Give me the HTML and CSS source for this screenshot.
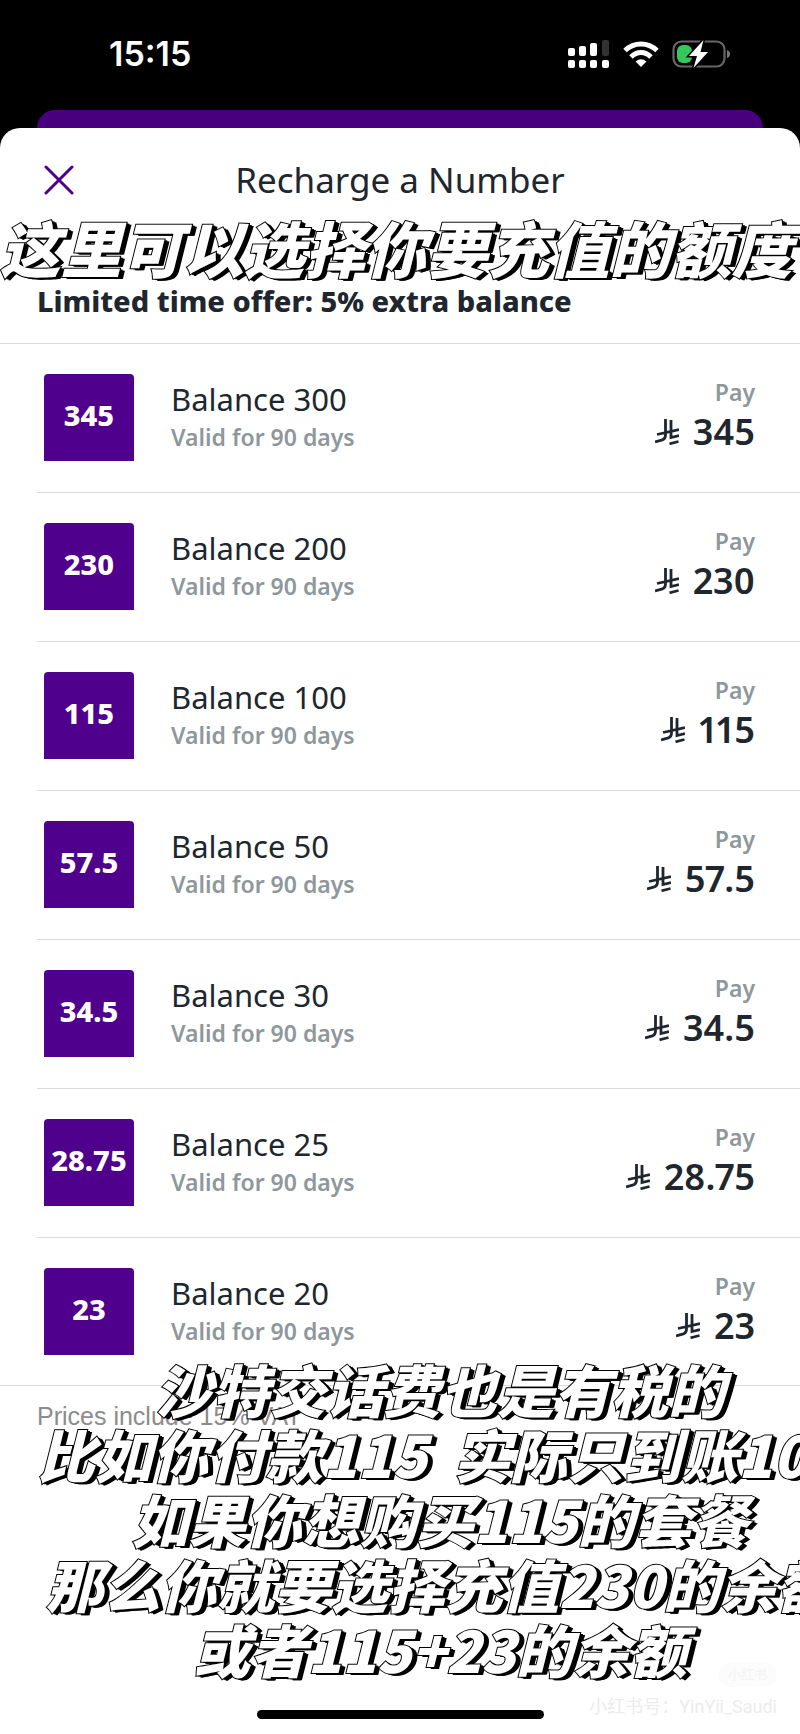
FILE: index.html
```
<!doctype html>
<html lang="en">
<head>
  <meta charset="utf-8">
  <meta name="viewport" content="width=device-width, initial-scale=1.0">
  <title>Recharge a Number</title>
  <link rel="stylesheet" href="styles.css">
</head>
<body>

  <svg class="defs" width="0" height="0" aria-hidden="true">
    <symbol id="riyal" viewBox="0 0 24 26">
      <path d="M10.500 0V16Q10.500 20 7.500 20.800L0 23M16 1V18.500L24 16.500M2 15.500L24 10.500M14.500 24.800L23.500 22.500" fill="none" stroke="currentColor" stroke-width="2.800"/>
    </symbol>
  </svg>

  <div class="statusbar">
    <span class="time">15:15</span>
    <div class="status-icons">
      <svg width="42" height="28" viewBox="0 0 42 28" fill="#fff">
        <rect x="0" y="8" width="7" height="8" rx="2"/>
        <rect x="11" y="6" width="7" height="10" rx="2"/>
        <rect x="22" y="3" width="7" height="13" rx="2"/>
        <rect x="34" y="0" width="7" height="16" rx="2" fill="#333"/>
        <rect x="0" y="20" width="7" height="8" rx="2"/>
        <rect x="11" y="20" width="7" height="8" rx="2"/>
        <rect x="22" y="20" width="7" height="8" rx="2"/>
        <rect x="34" y="20" width="7" height="8" rx="2"/>
      </svg>
      <svg width="36" height="26" viewBox="0 0 36 26" fill="none" stroke="#fff" stroke-width="5">
        <path d="M2 9.500Q9 3 18 3T34 9.500"/>
        <path d="M8 16Q12.500 11.500 18 11.500T28 16"/>
        <path d="M18 26L12.500 20.500Q18 16 23.500 20.500Z" fill="#fff" stroke="none"/>
      </svg>
      <svg width="58" height="28" viewBox="0 0 58 28">
        <rect x="1.500" y="1.500" width="51" height="25" rx="8" fill="none" stroke="#666" stroke-width="2.200"/>
        <path d="M55 10V18Q58 17 58 14T55 10Z" fill="#777"/>
        <rect x="5" y="5" width="15" height="18" rx="6" fill="#34c759"/>
        <path d="M31.500 0L17 16H25L21.500 28L36 12H28.500Z" fill="#fff" stroke="#000" stroke-width="3" paint-order="stroke"/>
      </svg>
    </div>
  </div>

  <div class="back-card"></div>

  <main class="sheet">
    <header class="sheet-header">
      <button class="close" type="button" aria-label="Close">
        <svg width="30" height="30" viewBox="0 0 30 30" fill="none" stroke="#4f008c" stroke-width="3" stroke-linecap="round"><path d="M2 2L28 28M28 2L2 28"/></svg>
      </button>
      <h1>Recharge a Number</h1>
    </header>

    <h2 class="offer">Limited time offer: 5% extra balance</h2>

    <ul class="plans">
      <li class="plan">
        <span class="tile">345</span>
        <div class="info"><h3>Balance 300</h3><p>Valid for 90 days</p></div>
        <div class="pay"><span class="label">Pay</span><span class="price"><svg><use href="#riyal"/></svg>345</span></div>
      </li>
      <li class="plan">
        <span class="tile">230</span>
        <div class="info"><h3>Balance 200</h3><p>Valid for 90 days</p></div>
        <div class="pay"><span class="label">Pay</span><span class="price"><svg><use href="#riyal"/></svg>230</span></div>
      </li>
      <li class="plan">
        <span class="tile">115</span>
        <div class="info"><h3>Balance 100</h3><p>Valid for 90 days</p></div>
        <div class="pay"><span class="label">Pay</span><span class="price"><svg><use href="#riyal"/></svg>115</span></div>
      </li>
      <li class="plan">
        <span class="tile">57.5</span>
        <div class="info"><h3>Balance 50</h3><p>Valid for 90 days</p></div>
        <div class="pay"><span class="label">Pay</span><span class="price"><svg><use href="#riyal"/></svg>57.5</span></div>
      </li>
      <li class="plan">
        <span class="tile">34.5</span>
        <div class="info"><h3>Balance 30</h3><p>Valid for 90 days</p></div>
        <div class="pay"><span class="label">Pay</span><span class="price"><svg><use href="#riyal"/></svg>34.5</span></div>
      </li>
      <li class="plan">
        <span class="tile">28.75</span>
        <div class="info"><h3>Balance 25</h3><p>Valid for 90 days</p></div>
        <div class="pay"><span class="label">Pay</span><span class="price"><svg><use href="#riyal"/></svg>28.75</span></div>
      </li>
      <li class="plan">
        <span class="tile">23</span>
        <div class="info"><h3>Balance 20</h3><p>Valid for 90 days</p></div>
        <div class="pay"><span class="label">Pay</span><span class="price"><svg><use href="#riyal"/></svg>23</span></div>
      </li>
    </ul>

    <p class="vat">Prices include 15% VAT</p>

    <div class="home-bar"></div>

    <!-- captions over the sheet -->
    <div class="caption caption-top" lang="zh">这里可以选择你要充值的额度</div>
    <div class="caption caption-bottom" lang="zh">
      <p>沙特交话费也是有税的</p>
      <p>比如你付款115&nbsp; 实际只到账100</p>
      <p>如果你想购买115的套餐</p>
      <p>那么你就要选择充值230的余额</p>
      <p>或者115+23的余额</p>
    </div>
    <div class="watermark" lang="zh">
      <span class="badge">小红书</span>
      <span>小红书号：YinYii_Saudi</span>
    </div>
  </main>

</body>
</html>
```
FILE: styles.css
```
* {
    margin: 0;
    padding: 0;
    box-sizing: border-box;
}
body {
    background: #000;
    color: #20262e;
    font-family: "Noto Sans", "Noto Sans CJK SC", sans-serif;
    overflow-x: hidden;
}
.defs {
    position: absolute;
}

/* status bar */
.statusbar {
    height: 110px;
    padding: 0 70px 2px 109px;
    display: flex;
    align-items: center;
    justify-content: space-between;
    color: #fff;
}
.time {
    font: 600 34px/40px Inter, sans-serif;
}
.status-icons {
    display: flex;
    align-items: center;
    gap: 13px;
}

.back-card {
    height: 18px;
    margin: 0 37px;
    background: #48007c;
    border-radius: 18px 18px 0 0;
}

/* sheet */
.sheet {
    position: relative;
    background: #fff;
    border-radius: 20px 20px 0 0;
    overflow: hidden;
}
.sheet-header {
    display: grid;
    grid-template-columns: 44px 1fr 44px;
    align-items: center;
    padding: 0 37px;
    height: 103px;
}
.close {
    height: 44px;
    border: 0;
    background: none;
    display: flex;
    align-items: center;
    justify-content: center;
}
h1 {
    font-size: 35px;
    line-height: 48px;
    font-weight: 400;
    text-align: center;
}
.offer {
    padding: 50px 37px 22px;
    font-size: 29px;
    line-height: 40px;
    font-weight: 800;
    border-bottom: 1px solid #d9dbdd;
}

/* plan list */
.plans {
    list-style: none;
    border-bottom: 1px solid #d9dbdd;
}
.plan {
    display: flex;
    height: 149px;
    margin-left: 37px;
    padding: 30px 45px 0 7px;
    border-bottom: 1px solid #d9dbdd;
}
.plan:last-child {
    height: 147px;
    border-bottom: 0;
}
.tile {
    width: 90px;
    height: 87px;
    padding-bottom: 6px;
    display: flex;
    align-items: center;
    justify-content: center;
    background: #4f008c;
    border-radius: 4px 4px 0 0;
    color: #fff;
    font-size: 29px;
    font-weight: 800;
}
.info {
    flex: 1;
    padding: 5px 0 0 37px;
}
h3 {
    font-size: 31px;
    line-height: 40px;
    font-weight: 400;
}
.info p,
.label {
    font-size: 23px;
    line-height: 36px;
    font-weight: 600;
    color: #8e979c;
}
.pay {
    display: flex;
    flex-direction: column;
    align-items: flex-end;
}
.price {
    display: flex;
    align-items: center;
    gap: 14px;
    font-size: 36px;
    line-height: 44px;
    font-weight: 600;
    font-variant-numeric: proportional-nums;
}
.price svg {
    width: 24px;
    height: 26px;
}

.vat {
    padding: 10px 37px 0;
    font: 25px/40px "Liberation Sans", sans-serif;
    color: #8c8c8c;
}
.home-bar {
    width: 287px;
    height: 9px;
    margin: 274px auto 15px;
    border-radius: 5px;
    background: #000;
}

/* captions */
.caption {
    position: absolute;
    left: 50%;
    transform: translateX(-50%);
    white-space: nowrap;
    text-align: center;
    font-family: "Noto Sans CJK SC", sans-serif;
    font-weight: 900;
    font-style: italic;
    color: #fff;
    -webkit-text-stroke: 2px #000;
    stroke-linejoin: round;
    paint-order: stroke fill;
    text-shadow: 1px 0 #000, 2px 1px #000, 3px 1px #000, 4px 2px #000, 5px 2px #000;
}
.caption-top {
    top: 82px;
    padding-right: 8px;
    font-size: 61px;
    line-height: 74px;
}
.caption-bottom {
    bottom: 53px;
    padding-left: 80px;
    font-size: 57px;
    line-height: 65px;
}
.watermark {
    position: absolute;
    right: 23px;
    bottom: 15px;
    display: flex;
    flex-direction: column;
    align-items: flex-end;
    font: 18px/24px Roboto, "Noto Sans CJK SC", sans-serif;
    color: #ececec;
}
.badge {
    padding: 0 10px;
    margin-bottom: 8px;
    border-radius: 12px;
    background: #fcfcfc;
    font-size: 13px;
    color: #f3f3f3;
}
```
